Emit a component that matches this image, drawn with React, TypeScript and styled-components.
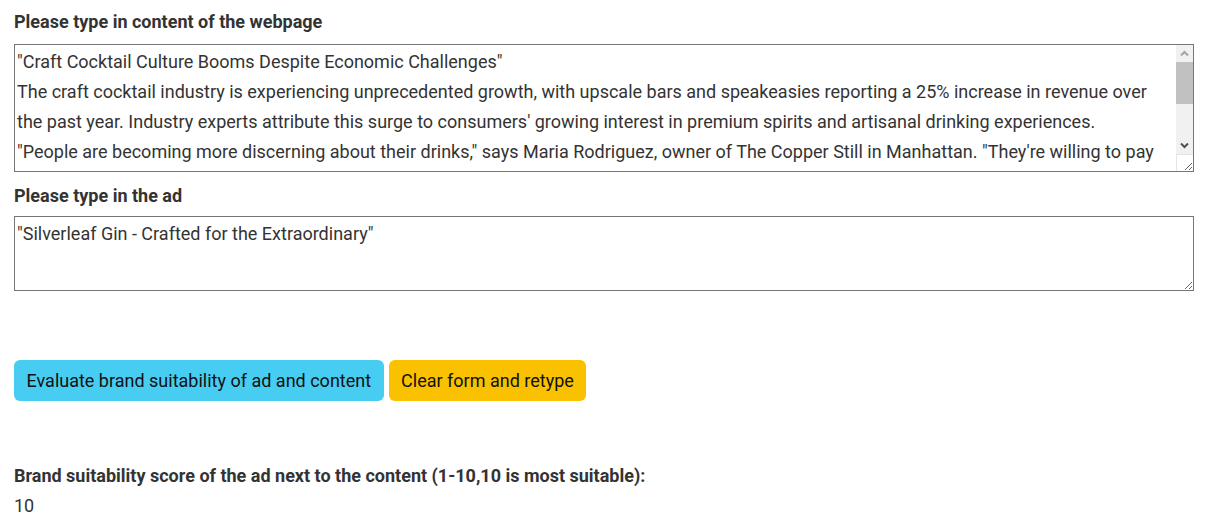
import React from "react";
import styled, { createGlobalStyle } from "styled-components";

const GlobalStyle = createGlobalStyle`
  body {
    margin: 0;
    font-family: Roboto, "Liberation Sans", sans-serif;
    color: #333333;
    background: #ffffff;
  }
`;

const Page = styled.div`
  padding: 11px 35px 0 14px;
`;

const Label = styled.div<{ $gap?: number }>`
  font-weight: bold;
  font-size: 18px;
  line-height: 22px;
  margin-bottom: ${(p) => p.$gap ?? 11}px;
`;

const FieldBox = styled.div`
  position: relative;
  margin-bottom: 13px;
`;

const Field = styled.textarea<{ $height: number; $scroll?: boolean }>`
  display: block;
  box-sizing: border-box;
  width: 100%;
  height: ${(p) => p.$height}px;
  margin: 0;
  padding: 2px ${(p) => (p.$scroll ? 19 : 2)}px 1px 2px;
  border: 1px solid #767676;
  border-radius: 0;
  font-family: Roboto, "Liberation Sans", sans-serif;
  font-size: 18px;
  line-height: 30px;
  color: #333333;
  resize: vertical;
  outline: none;
  overflow: hidden;
`;

/* fake classic scrollbar, the headless browser hides the real one */
const ScrollBar = styled.div`
  position: absolute;
  top: 1px;
  right: 1px;
  bottom: 1px;
  width: 17px;
  display: flex;
  flex-direction: column;
  pointer-events: none;
`;

const ArrowBtn = styled.div`
  height: 17px;
  flex: none;
  display: flex;
  align-items: center;
  justify-content: center;
  background: #f1f1f1;
`;

const Thumb = styled.div`
  height: 42px;
  flex: none;
  background: #c1c1c1;
`;

const Track = styled.div`
  flex: 1;
  background: #f1f1f1;
`;

const Corner = styled.div`
  height: 17px;
  flex: none;
  box-sizing: border-box;
  border-top: 1px solid #e4e4e4;
  border-left: 1px solid #e4e4e4;
`;

const ButtonRow = styled.div`
  display: flex;
  gap: 5px;
  margin-top: 69px;
`;

const Button = styled.button<{ $tone: "info" | "warning" }>`
  height: 41px;
  padding: 0 12.5px;
  border: none;
  border-radius: 6px;
  font-family: Roboto, "Liberation Sans", sans-serif;
  font-size: 18px;
  color: #111111;
  background: ${(p) => (p.$tone === "info" ? "#48cdf2" : "#f9c100")};
  cursor: pointer;
`;

const Result = styled.div`
  margin-top: 64px;
`;

const Score = styled.div`
  font-size: 18px;
  line-height: 26px;
`;

const Chevron: React.FC<{ up?: boolean }> = ({ up }) => (
  <svg width="9" height="7" viewBox="0 0 9 7">
    <path
      d={up ? "M1 5.5 L4.5 2 L8 5.5" : "M1 1.5 L4.5 5 L8 1.5"}
      fill="none"
      stroke={up ? "#a3a3a3" : "#505050"}
      strokeWidth="2"
    />
  </svg>
);

const article = `"Craft Cocktail Culture Booms Despite Economic Challenges"
The craft cocktail industry is experiencing unprecedented growth, with upscale bars and speakeasies reporting a 25% increase in revenue over the past year. Industry experts attribute this surge to consumers' growing interest in premium spirits and artisanal drinking experiences.
"People are becoming more discerning about their drinks," says Maria Rodriguez, owner of The Copper Still in Manhattan. "They're willing to pay more for quality ingredients and expertly crafted cocktails."
The trend has also sparked a renewed interest in small-batch distilleries, many of which are partnering with local bars to create signature drinks. Analysts expect the growth to continue through the next year as new venues open in cities across the country.`;

const App: React.FC = () => {
  return (
    <Page>
      <GlobalStyle />
      <Label>Please type in content of the webpage</Label>
      <FieldBox>
        <Field $height={128} $scroll defaultValue={article} />
        <ScrollBar>
          <ArrowBtn>
            <Chevron up />
          </ArrowBtn>
          <Thumb />
          <Track />
          <ArrowBtn>
            <Chevron />
          </ArrowBtn>
          <Corner />
        </ScrollBar>
      </FieldBox>
      <Label $gap={9}>Please type in the ad</Label>
      <FieldBox>
        <Field $height={75} defaultValue={`"Silverleaf Gin - Crafted for the Extraordinary"`} />
      </FieldBox>
      <ButtonRow>
        <Button $tone="info">Evaluate brand suitability of ad and content</Button>
        <Button $tone="warning">Clear form and retype</Button>
      </ButtonRow>
      <Result>
        <Label $gap={6}>Brand suitability score of the ad next to the content (1-10,10 is most suitable):</Label>
        <Score>10</Score>
      </Result>
    </Page>
  );
};

export default App;
